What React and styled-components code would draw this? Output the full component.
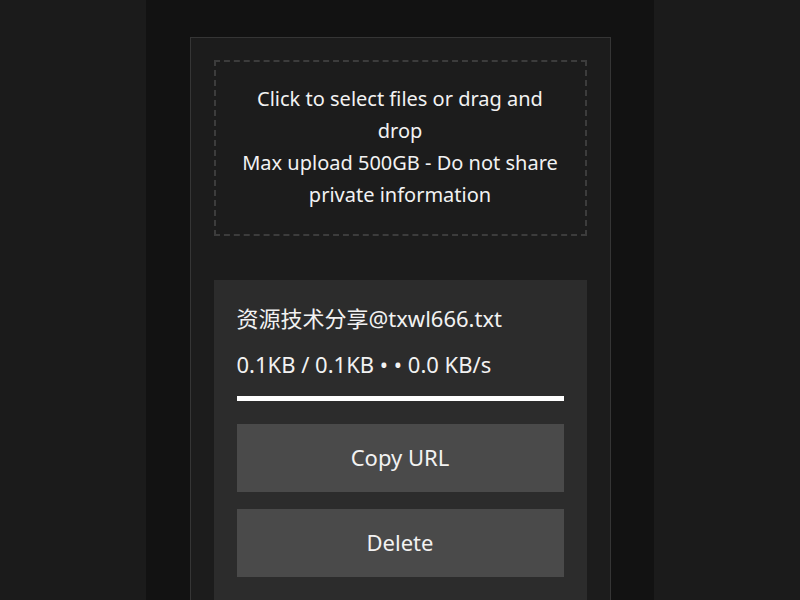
import React from "react";
import styled, { createGlobalStyle } from "styled-components";

const Global = createGlobalStyle`
  html, body {
    margin: 0;
    padding: 0;
    background: #1b1b1b;
    font-family: "Noto Sans", "Noto Sans CJK SC", sans-serif;
    color: #f2f2f2;
  }
`;

const Page = styled.div`
  display: flex;
  justify-content: center;
  min-height: 600px;
`;

const Column = styled.main`
  width: 508px;
  background: #121212;
  padding-top: 37px;
  display: flex;
  justify-content: center;
`;

const Card = styled.section`
  width: 421px;
  box-sizing: border-box;
  background: #1c1c1c;
  border: 1px solid #353535;
  padding: 22px 23px 0;
  display: flex;
  flex-direction: column;
  gap: 44px;
`;

const DropZone = styled.div`
  border: 2px dashed #3c3c3c;
  padding: 21px 23px 23px;
  text-align: center;
  font-size: 20px;
  line-height: 32px;
  cursor: pointer;
`;

const FileCard = styled.div`
  background: #2c2c2c;
  padding: 22px 23px 40px;
  display: flex;
  flex-direction: column;
`;

const Line = styled.div`
  font-size: 22px;
  line-height: 32px;
  white-space: nowrap;
  margin-bottom: ${(p) => p.$gap || 0}px;
`;

const Progress = styled.div`
  height: 5px;
  background: #ffffff;
  margin-bottom: 23px;
`;

const Button = styled.button`
  height: 68px;
  padding: 0 0 3px;
  border: none;
  background: #4a4a4a;
  color: #f2f2f2;
  font-family: inherit;
  font-size: 22px;
  margin-bottom: ${(p) => p.$gap || 0}px;
  cursor: pointer;
`;

export default function App() {
  return (
    <>
      <Global />
      <Page>
        <Column>
          <Card>
            <DropZone>
              Click to select files or drag and drop
              <br />
              Max upload 500GB - Do not share private information
            </DropZone>
            <FileCard>
              <Line $gap={14}>资源技术分享@txwl666.txt</Line>
              <Line $gap={16}>0.1KB / 0.1KB • • 0.0 KB/s</Line>
              <Progress />
              <Button $gap={17}>Copy URL</Button>
              <Button>Delete</Button>
            </FileCard>
          </Card>
        </Column>
      </Page>
    </>
  );
}
